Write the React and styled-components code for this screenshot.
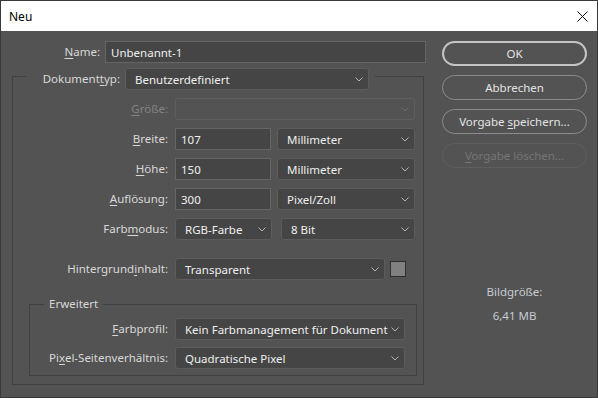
import styled, { createGlobalStyle } from "styled-components";

const Global = createGlobalStyle`
	html, body {
		margin: 0;
		padding: 0;
		background: #535353;
	}
	* {
		box-sizing: border-box;
	}
`;

function Chevron({ dim }) {
	return (
		<svg width="8" height="5" viewBox="0 0 8 5">
			<path
				d="M0.5 0.5 L4 4 L7.5 0.5"
				fill="none"
				stroke={dim ? "#6a6a6a" : "#b4b4b4"}
				strokeWidth="1"
			/>
		</svg>
	);
}

function Select({ width, children, disabled }) {
	return (
		<SelectBox $width={width} $disabled={disabled}>
			<span>{children}</span>
			<Chevron dim={disabled} />
		</SelectBox>
	);
}

function App() {
	return (
		<Window>
			<Global />
			<TitleBar>
				<Title>Neu</Title>
				<Close>
					<svg width="11" height="11" viewBox="0 0 11 11">
						<path d="M0.5 0.5 L10.5 10.5 M10.5 0.5 L0.5 10.5" stroke="#111" strokeWidth="1" />
					</svg>
				</Close>
			</TitleBar>
			<Body>
				<Main>
					<NameRow>
						<Label $width={99}>
							<u>N</u>ame:
						</Label>
						<TextInput $width={321}>Unbenannt-1</TextInput>
					</NameRow>

					<Group>
						<TypeLegend>
							<Label $width={94}>
								Dokument<u>t</u>yp:
							</Label>
							<Select width={244}>Benutzerdefiniert</Select>
						</TypeLegend>

						<Rows>
							<Row $label={155}>
								<Label $disabled>
									<u>G</u>röße:
								</Label>
								<Select width={240} disabled></Select>
							</Row>
							<Row $label={155}>
								<Label>
									<u>B</u>reite:
								</Label>
								<Fields $gap={6}>
									<TextInput $width={96}>107</TextInput>
									<Select width={138}>Millimeter</Select>
								</Fields>
							</Row>
							<Row $label={155}>
								<Label>
									<u>H</u>öhe:
								</Label>
								<Fields $gap={6}>
									<TextInput $width={96}>150</TextInput>
									<Select width={138}>Millimeter</Select>
								</Fields>
							</Row>
							<Row $label={155}>
								<Label>
									<u>A</u>uflösung:
								</Label>
								<Fields $gap={6}>
									<TextInput $width={96}>300</TextInput>
									<Select width={138}>Pixel/Zoll</Select>
								</Fields>
							</Row>
							<Row $label={155}>
								<Label>
									Farb<u>m</u>odus:
								</Label>
								<Fields $gap={9}>
									<Select width={97}>RGB-Farbe</Select>
									<Select width={134}>8 Bit</Select>
								</Fields>
							</Row>
						</Rows>

						<BackgroundRow $label={155}>
							<Label>
								Hintergrund<u>i</u>nhalt:
							</Label>
							<Fields $gap={5}>
								<Select width={210}>Transparent</Select>
								<Swatch />
							</Fields>
						</BackgroundRow>

						<SubGroup>
							<SubLegend>Erweitert</SubLegend>
							<SubRows>
								<Row $label={138}>
									<Label>
										<u>F</u>arbprofil:
									</Label>
									<Select width={230}>Kein Farbmanagement für Dokument</Select>
								</Row>
								<Row $label={138}>
									<Label>
										Pi<u>x</u>el-Seitenverhältnis:
									</Label>
									<Select width={230}>Quadratische Pixel</Select>
								</Row>
							</SubRows>
						</SubGroup>
					</Group>
				</Main>

				<Side>
					<Button $primary>
						<span>OK</span>
					</Button>
					<Button>
						<span>Abbrechen</span>
					</Button>
					<Button>
						<span>
							Vorgabe <u>s</u>peichern...
						</span>
					</Button>
					<Button $disabled>
						<span>
							<u>V</u>orgabe löschen...
						</span>
					</Button>
					<Info>
						<InfoLine>Bildgröße:</InfoLine>
						<InfoLine>6,41 MB</InfoLine>
					</Info>
				</Side>
			</Body>
		</Window>
	);
}

const Window = styled.div`
	width: 598px;
	height: 398px;
	border: 1px solid #3a3a3a;
	display: flex;
	flex-direction: column;
	font-family: "Noto Sans", "Open Sans", sans-serif;
	font-size: 11.5px;
	background: #535353;
`;

const TitleBar = styled.div`
	height: 30px;
	flex: none;
	background: #ffffff;
	display: flex;
	align-items: center;
	justify-content: space-between;
	padding: 0 9px 0 8px;
`;

const Title = styled.div`
	color: #000;
	font-size: 12px;
`;

const Close = styled.div`
	width: 11px;
	height: 11px;
	display: flex;
`;

const Body = styled.div`
	flex: 1;
	display: flex;
`;

const Main = styled.div`
	width: 440px;
	padding-top: 10px;
`;

const Label = styled.span`
	width: ${(p) => (p.$width ? `${p.$width}px` : "auto")};
	flex: none;
	text-align: right;
	color: ${(p) => (p.$disabled ? "#838383" : "#d8d8d8")};
	white-space: nowrap;
	line-height: 16px;

	u {
		text-decoration-thickness: 1px;
		text-underline-offset: 2px;
	}
`;

const NameRow = styled.div`
	display: flex;
	align-items: center;
	gap: 5px;
	height: 22px;
`;

const TextInput = styled.div`
	width: ${(p) => p.$width}px;
	height: 22px;
	padding: 0 5px;
	display: flex;
	align-items: center;
	background: #454545;
	border: 1px solid #656565;
	color: #efefef;
`;

const SelectBox = styled.div`
	width: ${(p) => p.$width}px;
	height: 22px;
	padding: 0 5px 0 9px;
	display: flex;
	align-items: center;
	justify-content: space-between;
	background: ${(p) => (p.$disabled ? "#535353" : "#454545")};
	border: 1px solid ${(p) => (p.$disabled ? "#5e5e5e" : "#5c5c5c")};
	border-radius: 3px;
	color: #efefef;
	white-space: nowrap;

	svg {
		flex: none;
		margin-left: 3px;
	}
`;

const Group = styled.fieldset`
	margin: 5px 0 0 11px;
	padding: 0 0 8px 0;
	width: 412px;
	border: 1px solid #404040;
`;

const TypeLegend = styled.legend`
	margin-left: 13px;
	padding: 0 6px 0 0;
	height: 16px;
	display: flex;
	align-items: flex-start;
	gap: 5px;

	& > span {
		margin-top: 3px;
	}
`;

const Rows = styled.div`
	display: flex;
	flex-direction: column;
	gap: 8px;
	padding-top: 14px;
`;

const Row = styled.div`
	display: grid;
	grid-template-columns: ${(p) => p.$label}px auto;
	column-gap: 7px;
	align-items: center;
	height: 22px;
`;

const BackgroundRow = styled(Row)`
	margin-top: 18px;
`;

const Fields = styled.div`
	display: flex;
	align-items: center;
	gap: ${(p) => p.$gap}px;
`;

const Swatch = styled.div`
	width: 16px;
	height: 16px;
	background: #808080;
	border: 1px solid #2f2f2f;
`;

const SubGroup = styled.fieldset`
	margin: 16px 6px 0 16px;
	padding: 0 0 6px 0;
	border: 1px solid #404040;
`;

const SubLegend = styled.legend`
	margin-left: 14px;
	padding: 0 5px;
	color: #d8d8d8;
	line-height: 16px;
`;

const SubRows = styled.div`
	display: flex;
	flex-direction: column;
	gap: 7px;
	padding-top: 6px;
`;

const Side = styled.div`
	width: 145px;
	margin-left: 1px;
	padding-top: 10px;
	display: flex;
	flex-direction: column;
	gap: 9px;
`;

const Button = styled.div`
	height: 25px;
	border-radius: 13px;
	display: flex;
	align-items: center;
	justify-content: center;
	border: ${(p) => (p.$primary ? "2px solid #c4c4c4" : "1px solid")};
	border-color: ${(p) => (p.$primary ? "#c4c4c4" : p.$disabled ? "#5e5e5e" : "#8c8c8c")};
	color: ${(p) => (p.$disabled ? "#767676" : "#e4e4e4")};
	white-space: nowrap;

	u {
		text-underline-offset: 2px;
	}
`;

const Info = styled.div`
	margin-top: 107px;
	display: flex;
	flex-direction: column;
	align-items: center;
	gap: 8px;
`;

const InfoLine = styled.div`
	color: #c6ccd2;
	line-height: 16px;
`;

export default App;
